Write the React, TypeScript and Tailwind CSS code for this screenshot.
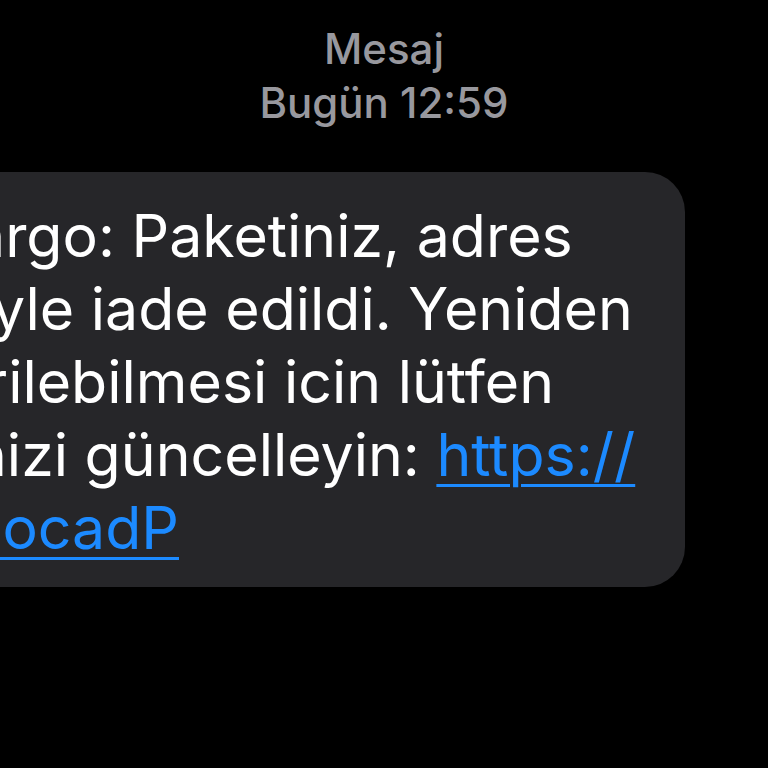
import React from "react";

const lines = [
  { text: "argo: Paketiniz, adres", shift: "-ml-[28px]" },
  { text: "yle iade edildi. Yeniden", shift: "-ml-[8px]" },
  { text: "rilebilmesi icin lütfen", shift: "-ml-[15px]" },
  { text: "nizi güncelleyin: ", shift: "-ml-[28px]", link: "https://" },
];

export default function App() {
  return (
    <div
      className="min-h-screen w-full overflow-hidden bg-black"
      style={{ fontFamily: "Inter, 'Noto Sans', sans-serif" }}
    >
      <header className="flex flex-col items-center pt-[22px] text-[42px] font-medium leading-[54px] text-[#98989e]">
        <p>Mesaj</p>
        <p>Bugün 12:59</p>
      </header>

      <div className="mt-[42px] flex">
        <div className="-ml-[120px] w-[805px] overflow-hidden rounded-[40px] bg-[#262629] pb-[23px] pl-[120px] pt-[27px] text-[59px] leading-[73px] text-white">
          {lines.map((line) => (
            <div key={line.text} className={`whitespace-nowrap ${line.shift}`}>
              {line.text}
              {line.link && (
                <span className="text-[#1c8aff] underline decoration-[3px] underline-offset-[8px]">
                  {line.link}
                </span>
              )}
            </div>
          ))}
          <div className="-ml-[32px] whitespace-nowrap text-[#1c8aff] underline decoration-[3px] underline-offset-[8px]">
            eocadP
          </div>
        </div>
      </div>
    </div>
  );
}
